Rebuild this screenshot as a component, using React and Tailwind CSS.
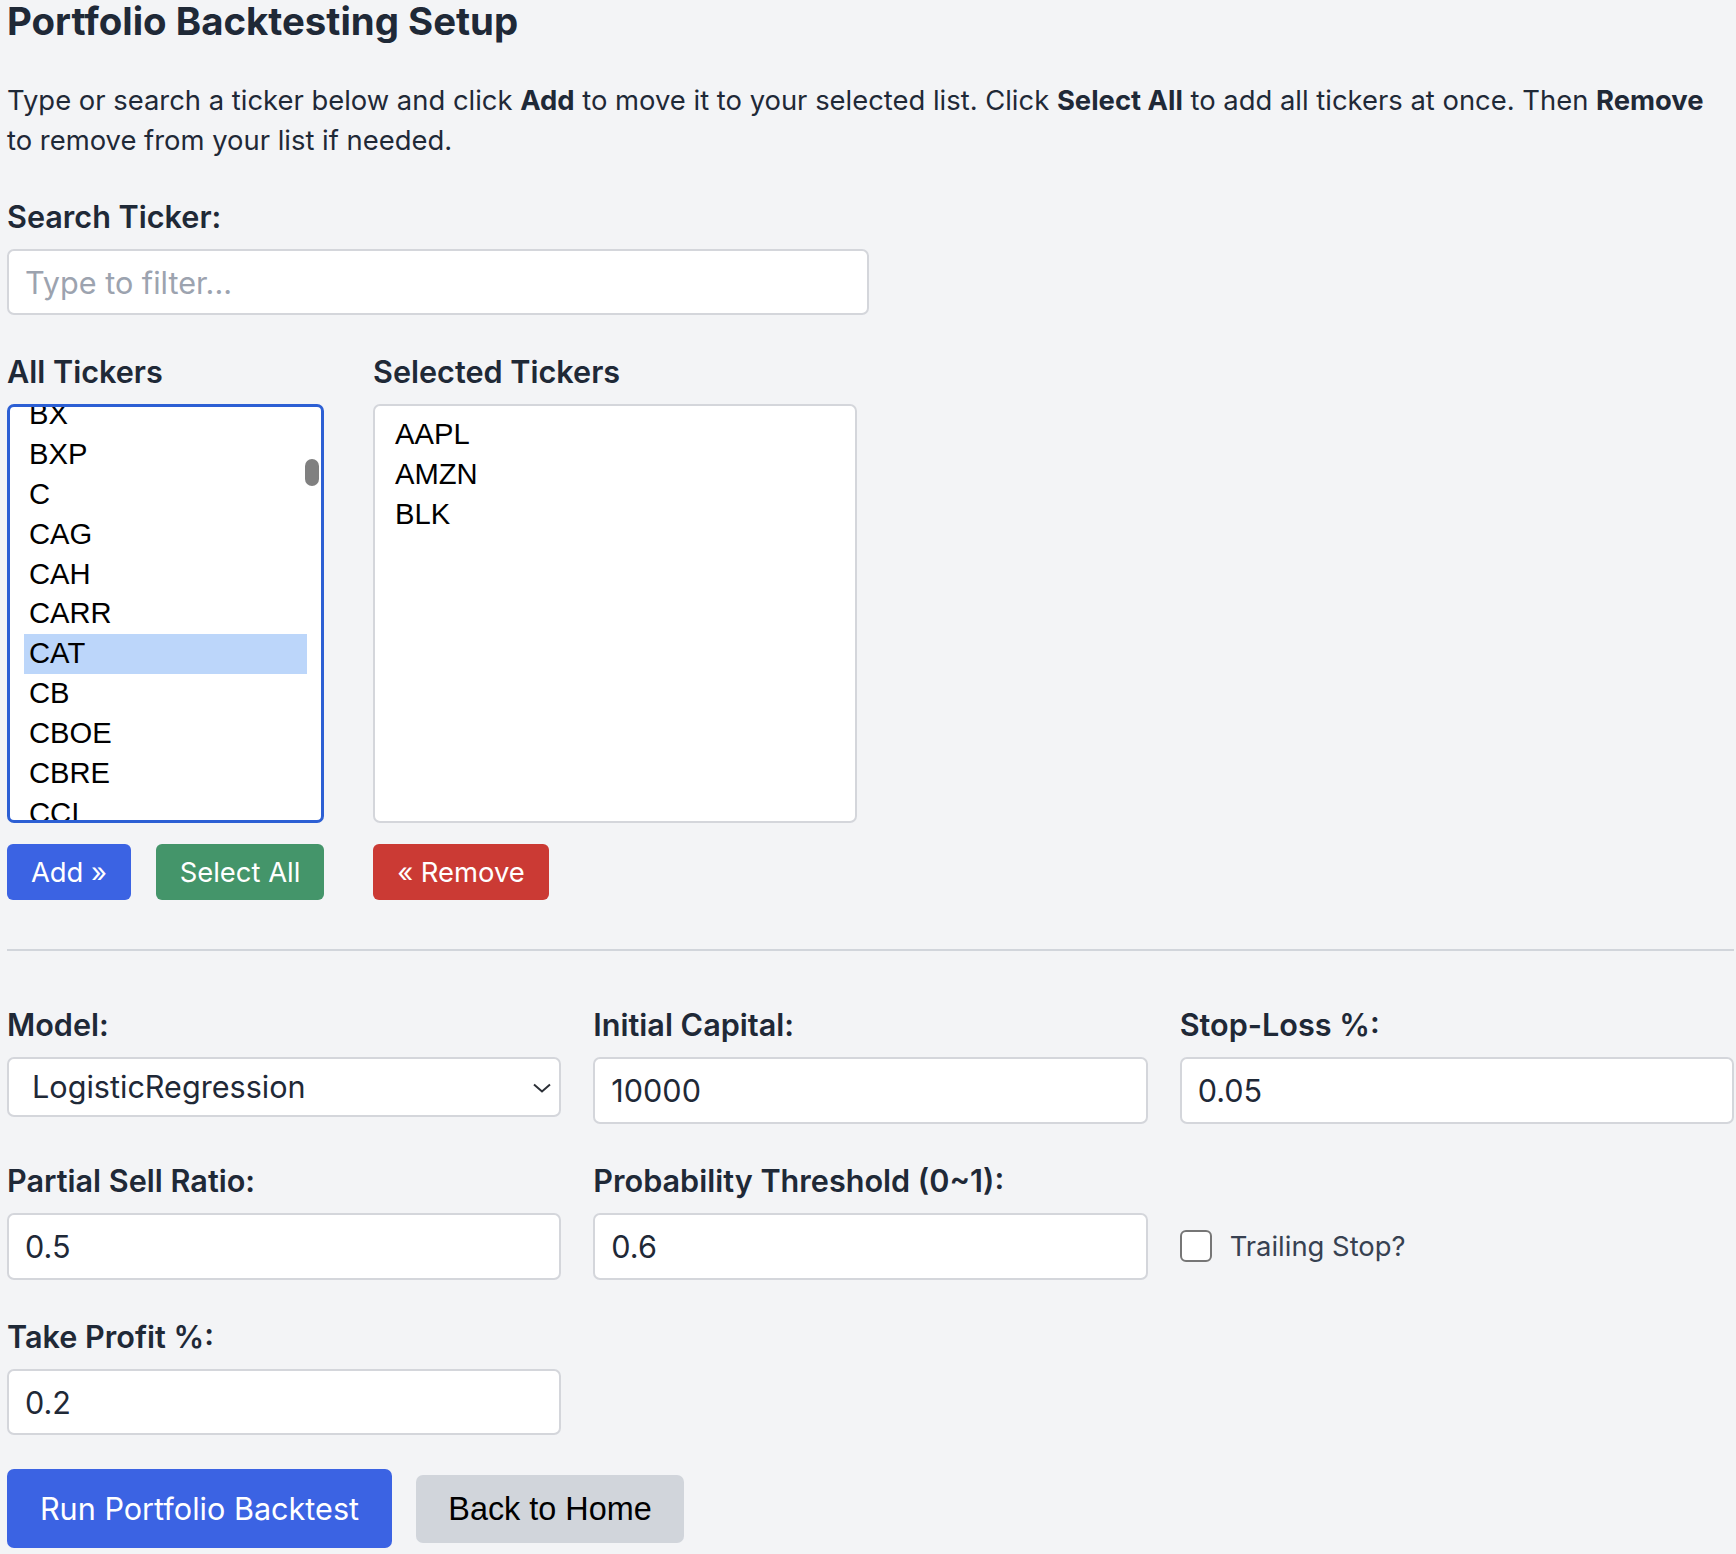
import React, { useState } from 'react';

const allTickers = ['BX', 'BXP', 'C', 'CAG', 'CAH', 'CARR', 'CAT', 'CB', 'CBOE', 'CBRE', 'CCI', 'CCL'];
const selectedTickers = ['AAPL', 'AMZN', 'BLK'];

function Field({ label, children }) {
  return (
    <div>
      <label className="block text-[30.6px] leading-[44.8px] font-semibold mb-[9.5px]">{label}</label>
      {children}
    </div>
  );
}

function TextInput({ value }) {
  return (
    <input
      type="text"
      defaultValue={value}
      className="w-full h-[66.5px] bg-white border-2 border-[#d4d6db] rounded-[7px] px-[16px] text-[30.6px] text-[#1f2937] outline-none"
    />
  );
}

export default function App() {
  const [active] = useState('CAT');

  return (
    <div className="min-h-screen bg-[#f3f4f6] font-['Inter',sans-serif] text-[#1f2937]">
      <div className="pl-[7px] pr-[2px] pb-[10px]">
        <h1 className="-mt-[4.5px] text-[38.4px] leading-[51px] font-bold">Portfolio Backtesting Setup</h1>

        <p className="mt-[33px] text-[27.4px] leading-[40px]">
          Type or search a ticker below and click <strong>Add</strong> to move it to your selected list. Click{' '}
          <strong>Select All</strong> to add all tickers at once. Then <strong>Remove</strong>
          <br />
          to remove from your list if needed.
        </p>

        {/* Search */}
        <label className="block mt-[35.5px] mb-[9px] text-[30.6px] leading-[44.8px] font-semibold">Search Ticker:</label>
        <input
          type="text"
          placeholder="Type to filter..."
          className="w-[862px] h-[66.5px] bg-white border-2 border-[#d4d6db] rounded-[7px] px-[16px] text-[30.6px] placeholder:text-[#9ca3af] outline-none"
        />

        {/* Ticker lists */}
        <div className="mt-[35px] flex gap-[49px]">
          <div className="w-[317px]">
            <div className="text-[30.6px] leading-[44.8px] font-semibold mb-[9px]">All Tickers</div>
            <div className="relative h-[419px] bg-white border-[3px] border-[#2c5fd4] rounded-[7px] overflow-hidden">
              <div className="-mt-[12px] pl-[14px] pr-[14px] font-['Liberation_Sans',Arial,sans-serif] text-[29.2px] text-black">
                {allTickers.map((t) => (
                  <div
                    key={t}
                    className={`h-[39.86px] leading-[39.86px] pl-[5px] ${t === active ? 'bg-[#bcd6fa]' : ''}`}
                  >
                    {t}
                  </div>
                ))}
              </div>
              <div className="absolute left-[295px] top-[52px] w-[14px] h-[27px] rounded-full bg-[#808080]" />
            </div>
            <div className="mt-[21px] flex gap-[25px]">
              <button className="w-[124px] h-[56px] rounded-[6px] bg-[#3b63e3] text-white text-[27.4px]">Add »</button>
              <button className="w-[168px] h-[56px] rounded-[6px] bg-[#44956a] text-white text-[27.4px]">Select All</button>
            </div>
          </div>

          <div className="w-[484px]">
            <div className="text-[30.6px] leading-[44.8px] font-semibold mb-[9px]">Selected Tickers</div>
            <div className="h-[419px] bg-white border-2 border-[#d4d6db] rounded-[7px] overflow-hidden pt-[9px] pl-[15px] font-['Liberation_Sans',Arial,sans-serif] text-[29.2px] text-black">
              {selectedTickers.map((t) => (
                <div key={t} className="h-[39.86px] leading-[39.86px] pl-[5px]">
                  {t}
                </div>
              ))}
            </div>
            <div className="mt-[21px] flex">
              <button className="w-[176px] h-[56px] rounded-[6px] bg-[#cb3a34] text-white text-[27.4px]">« Remove</button>
            </div>
          </div>
        </div>

        <hr className="mt-[49px] border-0 h-[2px] bg-[#d1d5db]" />

        {/* Parameters */}
        <div className="mt-[52px] grid grid-cols-3 gap-x-[32px] gap-y-[35px]">
          <Field label="Model:">
            <div className="relative h-[60px] bg-white border-2 border-[#d4d6db] rounded-[7px] flex items-center pl-[23px] text-[30.6px]">
              <span>LogisticRegression</span>
              <svg className="absolute right-[8px] top-[24px]" width="18" height="10" viewBox="0 0 18 10" fill="none">
                <path d="M1 1.5 L9 8.5 L17 1.5" stroke="#2b2f36" strokeWidth="2" />
              </svg>
            </div>
          </Field>
          <Field label="Initial Capital:">
            <TextInput value="10000" />
          </Field>
          <Field label="Stop-Loss %:">
            <TextInput value="0.05" />
          </Field>

          <Field label="Partial Sell Ratio:">
            <TextInput value="0.5" />
          </Field>
          <Field label="Probability Threshold (0~1):">
            <TextInput value="0.6" />
          </Field>
          <div className="pt-[67px]">
            <label className="flex items-center gap-[18px]">
              <span className="w-[32px] h-[32px] bg-white border-2 border-[#767676] rounded-[6px]" />
              <span className="text-[27.4px] leading-[40px] text-[#374151]">Trailing Stop?</span>
            </label>
          </div>

          <Field label="Take Profit %:">
            <TextInput value="0.2" />
          </Field>
        </div>

        <div className="mt-[34px] flex items-center gap-[24px]">
          <button className="w-[385px] h-[79px] rounded-[7px] bg-[#3b63e3] text-white text-[30.6px]">Run Portfolio Backtest</button>
          <button className="w-[268px] h-[68px] rounded-[7px] bg-[#d1d5db] text-black text-[32.4px] font-['Liberation_Sans',Arial,sans-serif]">
            Back to Home
          </button>
        </div>
      </div>
    </div>
  );
}
